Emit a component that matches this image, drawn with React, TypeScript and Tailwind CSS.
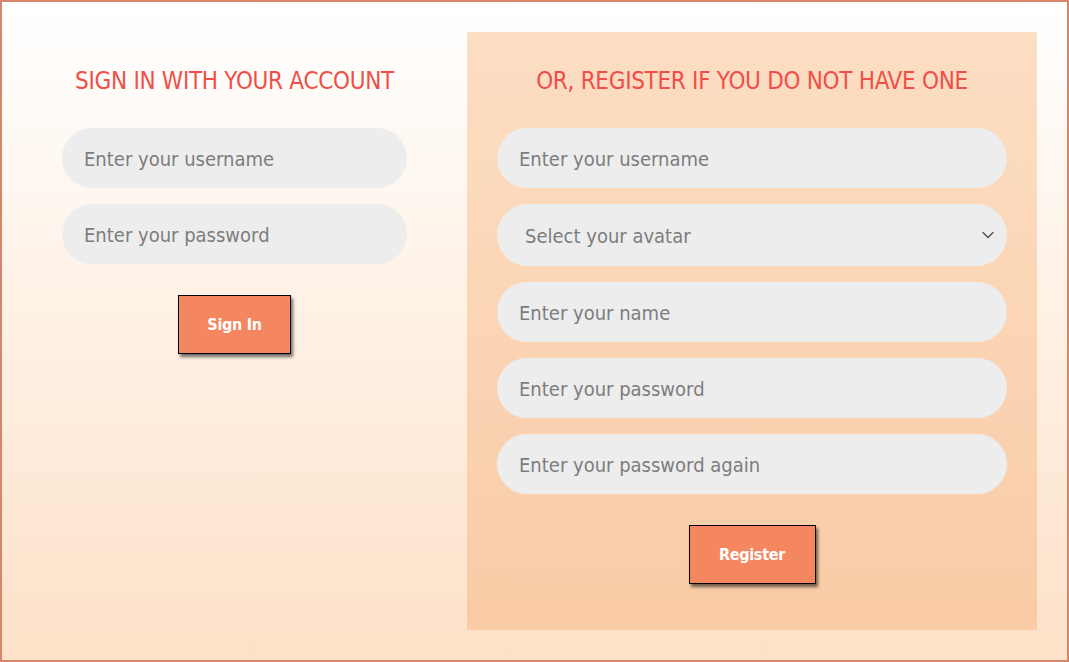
import { ChevronDown } from 'lucide-react';

const FONT = "font-['DejaVu_Sans',sans-serif] font-stretch-condensed";

const field =
  'h-[60px] w-full rounded-full bg-[#ededed] px-[22px] pt-[2px] text-[20px] text-[#555] placeholder:text-[#7d7d7d] outline-none font-stretch-condensed';

function Field({ placeholder, type = 'text' }: { placeholder: string; type?: string }) {
  return <input type={type} placeholder={placeholder} className={field} />;
}

function ActionButton({ label, width }: { label: string; width: string }) {
  return (
    <button
      className={`${width} h-[59px] border border-black bg-[#f4875f] text-[16px] font-bold tracking-[-0.3px] text-white font-stretch-condensed shadow-[2px_3px_3px_rgba(0,0,0,0.55)]`}
    >
      {label}
    </button>
  );
}

export default function App() {
  return (
    <div
      className={`${FONT} flex h-[662px] w-full gap-[60px] border-2 border-[#d4876a] bg-gradient-to-b from-white to-[#fde1c8] pl-[60px] pt-[30px]`}
    >
      <div className="flex w-[345px] flex-col pt-[30px]">
        <h2 className="h-[36px] whitespace-nowrap text-center text-[24px] leading-[38px] tracking-[-0.3px] text-[#ef4f48]">
          SIGN IN WITH YOUR ACCOUNT
        </h2>
        <div className="mt-[30px] flex flex-col gap-4">
          <Field placeholder="Enter your username" />
          <Field placeholder="Enter your password" type="password" />
        </div>
        <div className="mt-[31px] flex justify-center">
          <ActionButton label="Sign In" width="w-[113px]" />
        </div>
      </div>

      <div className="flex h-[598px] w-[570px] flex-col bg-gradient-to-b from-[#fcdec3] to-[#f9cba6] px-[30px] pt-[30px]">
        <h2 className="h-[36px] whitespace-nowrap text-center text-[24px] leading-[38px] tracking-[-0.3px] text-[#ef4f48]">
          OR, REGISTER IF YOU DO NOT HAVE ONE
        </h2>
        <div className="mt-[30px] flex flex-col gap-4">
          <Field placeholder="Enter your username" />
          <div className="relative">
            <select
              defaultValue=""
              className="h-[62px] w-full appearance-none rounded-full bg-[#ededed] px-[28px] pt-[2px] text-[20px] text-[#7d7d7d] outline-none font-stretch-condensed"
            >
              <option value="" disabled>
                Select your avatar
              </option>
              <option>Cat</option>
              <option>Dog</option>
            </select>
            <ChevronDown
              size={20}
              strokeWidth={1.5}
              className="pointer-events-none absolute right-[9px] top-1/2 -translate-y-1/2 text-[#4a4a4a]"
            />
          </div>
          <Field placeholder="Enter your name" />
          <Field placeholder="Enter your password" type="password" />
          <Field placeholder="Enter your password again" type="password" />
        </div>
        <div className="mt-[31px] flex justify-center">
          <ActionButton label="Register" width="w-[127px]" />
        </div>
      </div>
    </div>
  );
}
